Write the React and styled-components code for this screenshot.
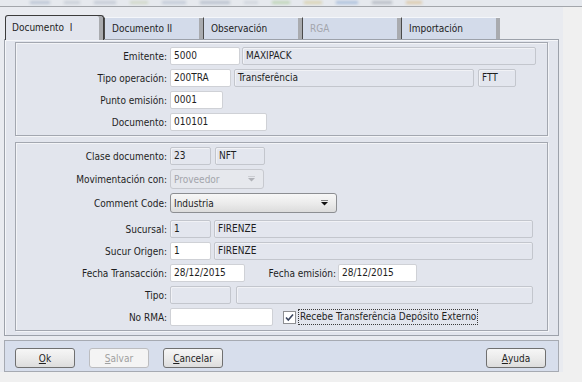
import styled, { createGlobalStyle } from 'styled-components';

const GlobalStyle = createGlobalStyle`
  html, body { margin: 0; padding: 0; background: #f0f0f0; }
  body {
    font-family: "DejaVu Sans Condensed", "Liberation Sans", Arial, sans-serif;
    font-size: 10px;
    color: #1e1e1e;
  }
  * { box-sizing: border-box; }
`;

const Page = styled.div`
  width: 582px;
  height: 382px;
  overflow: hidden;
  background: #f0f0f0;
`;

const TopStrip = styled.div`
  height: 7px;
  display: flex;
  align-items: center;
  gap: 14px;
  padding: 0 30px 1px;
  background: #e6e9ee;
  border-bottom: 1px solid #a3a6ab;
  overflow: hidden;
`;

const Blob = styled.span`
  display: block;
  width: ${p => p.$w}px;
  height: 3px;
  background: ${p => p.$c};
  filter: blur(1.5px);
`;

const Dialog = styled.div`
  width: 563px;
  padding: 8px 4px 0 4px;
  background: #e9ebf0;
`;

const TabStrip = styled.div`
  display: flex;
  align-items: flex-end;
  height: 24px;
  padding-left: 1px;
  position: relative;
  z-index: 1;
`;

const Tab = styled.div`
  width: 99px;
  height: ${p => (p.$active ? 25 : 22)}px;
  margin-bottom: ${p => (p.$active ? -1 : 0)}px;
  display: flex;
  align-items: center;
  padding-left: ${p => (p.$active ? 6 : 7)}px;
  color: ${p => (p.$disabled ? '#a3a6ad' : '#1e1e1e')};
  background: ${p => (p.$active ? '#e2e5ed' : '#d3dbea')};
  border-left: 1px solid ${p => (p.$active ? '#3c3c3c' : '#4a4a4a')};
  border-top: 1px solid ${p => (p.$active ? '#3c3c3c' : '#f4f6fa')};
  border-right: ${p => (p.$active ? '1px solid #3c3c3c' : '0')};
  border-radius: ${p => (p.$active ? '3px 3px 0 0' : '0')};
  box-shadow: inset -4px 0 0 #a9abaf;
  padding-bottom: ${p => (p.$active ? 2 : 0)}px;
`;

const TabPanel = styled.div`
  width: 555px;
  display: flex;
  flex-direction: column;
  gap: 6px;
  padding: 2px 10px 4px 10px;
  background: #e2e5ed;
  border: 1px solid #9ca1aa;
  box-shadow: inset 1px 1px 0 #f5f6f9;
`;

const Group = styled.div`
  display: flex;
  flex-direction: column;
  gap: 4px;
  padding: 4px 0;
  border: 1px solid #a3a7b0;
  box-shadow: 1px 1px 0 #f3f4f7, inset 1px 1px 0 #f3f4f7;
`;

const Row = styled.div`
  display: flex;
  align-items: center;
  height: ${p => p.$h || 18}px;
  margin-top: ${p => p.$mt || 0}px;
`;

const Label = styled.span`
  width: ${p => p.$w || 151}px;
  flex: none;
  text-align: right;
  margin-right: ${p => p.$gap ?? 3}px;
  white-space: nowrap;
`;

const Field = styled.div`
  width: ${p => p.$w}px;
  height: 18px;
  flex: none;
  margin-left: ${p => p.$ml || 0}px;
  padding: 0 3px;
  line-height: 16px;
  white-space: nowrap;
  overflow: hidden;
  border-radius: 2px;
  border: 1px solid ${p => (p.$ro ? '#c3c6cd' : '#cfd1d6')};
  background: ${p => (p.$ro ? '#e3e6ee' : '#ffffff')};
  box-shadow: ${p => (p.$ro ? 'inset 1px 1px 0 #f1f2f6' : 'none')};
  color: #1e1e1e;
`;

const Combo = styled.div`
  width: ${p => p.$w}px;
  height: 20px;
  flex: none;
  display: flex;
  align-items: center;
  justify-content: space-between;
  padding: 0 8px 0 3px;
  border-radius: 3px;
  border: 1px solid ${p => (p.$disabled ? '#c7c9cf' : '#8c8e92')};
  background: ${p =>
    p.$disabled ? '#e6e8ed' : 'linear-gradient(#f7f7f7, #ececec 50%, #dcdcdc)'};
  color: ${p => (p.$disabled ? '#a3a5ab' : '#1e1e1e')};
`;

const Check = styled.span`
  width: 13px;
  height: 13px;
  margin-left: 10px;
  flex: none;
  display: flex;
  align-items: center;
  justify-content: center;
  background: #fff;
  border: 1px solid #8e8f92;
`;

const CheckText = styled.span`
  margin-left: 2px;
  padding: 0 1px;
  border: 1px dotted #3a3a3a;
  line-height: 14px;
  white-space: nowrap;
`;

const ButtonBar = styled.div`
  width: 555px;
  height: 32px;
  margin-top: 4px;
  display: flex;
  align-items: flex-start;
  gap: 14px;
  padding: 7px 12px 0 10px;
  background: #d7deec;
  border: 1px solid #a6aab2;
`;

const Button = styled.div`
  width: 60px;
  height: 20px;
  display: flex;
  align-items: center;
  justify-content: center;
  margin-left: ${p => (p.$push ? 'auto' : '0')};
  border-radius: 3px;
  border: 1px solid ${p => (p.$disabled ? '#bcbdc0' : '#707070')};
  background: ${p =>
    p.$disabled ? '#f4f4f4' : 'linear-gradient(#f6f6f6, #ebebeb 50%, #dddddd)'};
  color: ${p => (p.$disabled ? '#a0a0a0' : '#1e1e1e')};

  u { text-decoration: underline; }
`;

const Arrow = ({ color }) => (
  <svg width="7" height="6" viewBox="0 0 7 6">
    <rect x="0" y="0" width="7" height="1" fill={color} opacity="0.5" />
    <path d="M0 2h7L3.5 5.5z" fill={color} />
  </svg>
);

export default function App() {
  return (
    <Page>
      <GlobalStyle />
      <TopStrip>
        <Blob $w={20} $c="#b9c3d3" />
        <Blob $w={16} $c="#c7cdd6" />
        <Blob $w={22} $c="#c2c9d4" />
        <Blob $w={18} $c="#cfd6c6" />
        <Blob $w={24} $c="#c0c8d6" />
        <Blob $w={30} $c="#b7bfcc" />
        <Blob $w={14} $c="#cfd4dc" />
        <Blob $w={18} $c="#bdd3b4" />
        <Blob $w={18} $c="#d9d2b0" />
        <Blob $w={22} $c="#a9bedc" />
        <Blob $w={20} $c="#b4b9c2" />
        <Blob $w={16} $c="#dcc8a8" />
      </TopStrip>
      <Dialog>
        <TabStrip>
          <Tab $active>Documento&nbsp; I</Tab>
          <Tab>Documento II</Tab>
          <Tab>Observación</Tab>
          <Tab $disabled>RGA</Tab>
          <Tab>Importación</Tab>
        </TabStrip>
        <TabPanel>
          <Group>
            <Row>
              <Label>Emitente:</Label>
              <Field $w={70}>5000</Field>
              <Field $ro $w={294} $ml={2}>MAXIPACK</Field>
            </Row>
            <Row>
              <Label>Tipo operación:</Label>
              <Field $w={61}>200TRA</Field>
              <Field $ro $w={240} $ml={3}>Transferência</Field>
              <Field $ro $w={38} $ml={4}>FTT</Field>
            </Row>
            <Row>
              <Label>Punto emisión:</Label>
              <Field $w={53}>0001</Field>
            </Row>
            <Row>
              <Label>Documento:</Label>
              <Field $w={97}>010101</Field>
            </Row>
          </Group>
          <Group>
            <Row>
              <Label>Clase documento:</Label>
              <Field $ro $w={41}>23</Field>
              <Field $ro $w={50} $ml={4}>NFT</Field>
            </Row>
            <Row $h={20}>
              <Label>Movimentación con:</Label>
              <Combo $disabled $w={94}>
                <span>Proveedor</span>
                <Arrow color="#b0b2b8" />
              </Combo>
            </Row>
            <Row $h={20}>
              <Label>Comment Code:</Label>
              <Combo $w={167}>
                <span>Industria</span>
                <Arrow color="#111" />
              </Combo>
            </Row>
            <Row $mt={3}>
              <Label>Sucursal:</Label>
              <Field $ro $w={41}>1</Field>
              <Field $ro $w={319} $ml={3}>FIRENZE</Field>
            </Row>
            <Row>
              <Label>Sucur Origen:</Label>
              <Field $w={41}>1</Field>
              <Field $ro $w={319} $ml={3}>FIRENZE</Field>
            </Row>
            <Row>
              <Label>Fecha Transacción:</Label>
              <Field $w={75}>28/12/2015</Field>
              <Label $w={91} $gap={2}>Fecha emisión:</Label>
              <Field $w={79}>28/12/2015</Field>
            </Row>
            <Row>
              <Label>Tipo:</Label>
              <Field $ro $w={61}></Field>
              <Field $ro $w={297} $ml={5}></Field>
            </Row>
            <Row>
              <Label>No RMA:</Label>
              <Field $w={103}></Field>
              <Check>
                <svg width="9" height="9" viewBox="0 0 9 9">
                  <path d="M1 4.5l2.3 2.5L8 1.5" fill="none" stroke="#3b4660" strokeWidth="1.6" />
                </svg>
              </Check>
              <CheckText>Recebe Transferência Depósito Externo</CheckText>
            </Row>
          </Group>
        </TabPanel>
        <ButtonBar>
          <Button><u>O</u>k</Button>
          <Button $disabled><u>S</u>alvar</Button>
          <Button><u>C</u>ancelar</Button>
          <Button $push><u>A</u>yuda</Button>
        </ButtonBar>
      </Dialog>
    </Page>
  );
}
